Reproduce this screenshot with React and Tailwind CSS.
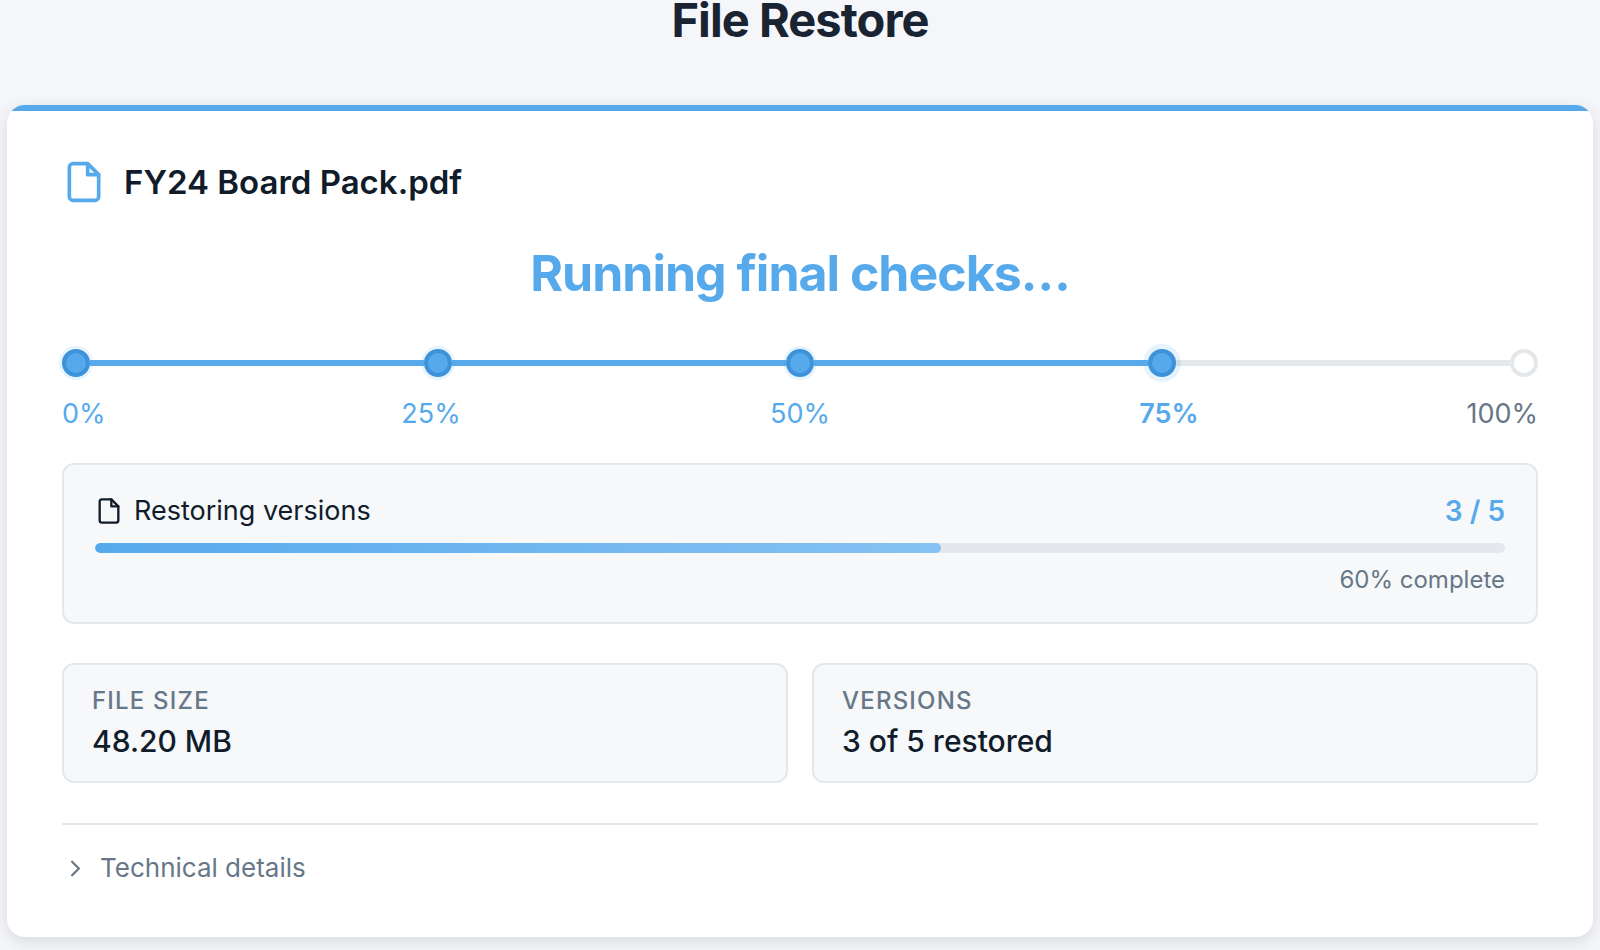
function FileIcon({ className }) {
  return (
    <svg className={className} viewBox="0 0 24 24" fill="none" stroke="currentColor" strokeWidth="2" strokeLinecap="round" strokeLinejoin="round" aria-hidden="true">
      <path d="M14 2H6a2 2 0 0 0-2 2v16a2 2 0 0 0 2 2h12a2 2 0 0 0 2-2V8z" />
      <path d="M14 2v6h6" />
    </svg>
  );
}

const steps = [
  { label: "0%", state: "done" },
  { label: "25%", state: "done" },
  { label: "50%", state: "done" },
  { label: "75%", state: "current" },
  { label: "100%", state: "pending" },
];

const dotStyles = {
  done: "border-[#3d92d9] bg-[#56aaec] shadow-[0_0_0_3px_#e8f4fd]",
  current: "border-[#3d92d9] bg-[#56aaec] shadow-[0_0_0_5px_rgba(86,170,236,0.15)]",
  pending: "border-[#e5e8eb] bg-white",
};

const labelStyles = {
  done: "text-[#56aaec]",
  current: "font-semibold text-[#56aaec]",
  pending: "text-[#677788]",
};

const stats = [
  { label: "File size", value: "48.20 MB" },
  { label: "Versions", value: "3 of 5 restored" },
];

export default function App() {
  const percent = 60;
  return (
    <div className="min-h-screen overflow-hidden bg-[#f4f6fa] px-[7px] pb-3 font-['Inter',sans-serif] text-[#111c2b]">
      <h1 className="text-center text-[47px] leading-10 font-bold tracking-[-0.02em] text-[#1a2332]">File Restore</h1>

      <main className="mt-[65px] overflow-hidden rounded-[18px] bg-white shadow-[0_4px_16px_rgba(0,0,0,0.12)]">
        <div className="h-1.5 bg-[#56aaec]" />
        <div className="px-[55px] pt-12 pb-[49px]">
          <div className="flex h-[46px] items-center gap-[18px]">
            <FileIcon className="size-11 text-[#56aaec]" />
            <h2 className="text-[33px] leading-[46px] font-semibold">FY24 Board Pack.pdf</h2>
          </div>

          <p className="mt-[35px] text-center text-[50px] leading-[66px] font-bold tracking-[-0.02em] text-[#56aaec]">Running final checks…</p>

          <div className="mt-[43px] flex items-center">
            {steps.map((step, i) => (
              <div key={step.label} className={i === 0 ? "flex items-center" : "flex flex-1 items-center"}>
                {i > 0 && <div className={step.state === "pending" ? "h-1.5 flex-1 bg-[#e5e8eb]" : "relative z-10 h-1.5 flex-1 bg-[#56aaec]"} />}
                <div className={`relative size-7 rounded-full border-4 ${dotStyles[step.state]}`} />
              </div>
            ))}
          </div>
          <div className="mt-[17px] grid grid-cols-[1fr_2fr_2fr_2fr_1fr] text-center text-[27px] leading-10">
            {steps.map((step) => (
              <span key={step.label} className={`first:text-left last:text-right ${labelStyles[step.state]}`}>{step.label}</span>
            ))}
          </div>

          <section className="mt-[29px] rounded-xl border-2 border-[#e5e8eb] bg-[#f6f8fa] px-[31px] pt-[26px] pb-6">
            <div className="flex items-center justify-between leading-10">
              <div className="flex items-center gap-[11px] text-[27px]">
                <FileIcon className="size-7" />
                <span>Restoring versions</span>
              </div>
              <span className="text-[28px] font-semibold text-[#56aaec]">3 / 5</span>
            </div>
            <div className="mt-3 h-2.5 overflow-hidden rounded-full bg-[#e4e8ec]">
              <div className="h-full rounded-full bg-linear-to-r from-[#56aaec] to-[#86c2f3]" style={{ width: `${percent}%` }} />
            </div>
            <p className="mt-[9px] text-right text-[24px] leading-9 text-[#677788]">{percent}% complete</p>
          </section>

          <dl className="mt-[39px] grid grid-cols-2 gap-6">
            {stats.map((stat) => (
              <div key={stat.label} className="rounded-xl border-2 border-[#e5e8eb] bg-[#f6f8fa] px-7 py-[18px]">
                <dt className="text-[24px] leading-9 font-medium tracking-wider text-[#677788] uppercase">{stat.label}</dt>
                <dd className="text-[30px] leading-[44px] font-medium">{stat.value}</dd>
              </div>
            ))}
          </dl>

          <div className="mt-10 border-t-2 border-[#e5e8eb] pt-[23px]">
            <button type="button" className="flex items-center gap-[11px] text-[26px] leading-10 text-[#677788]">
              <svg className="size-[27px]" viewBox="0 0 24 24" fill="none" stroke="currentColor" strokeWidth="2" strokeLinecap="round" strokeLinejoin="round" aria-hidden="true">
                <path d="m9 18 6-6-6-6" />
              </svg>
              Technical details
            </button>
          </div>
        </div>
      </main>
    </div>
  );
}
